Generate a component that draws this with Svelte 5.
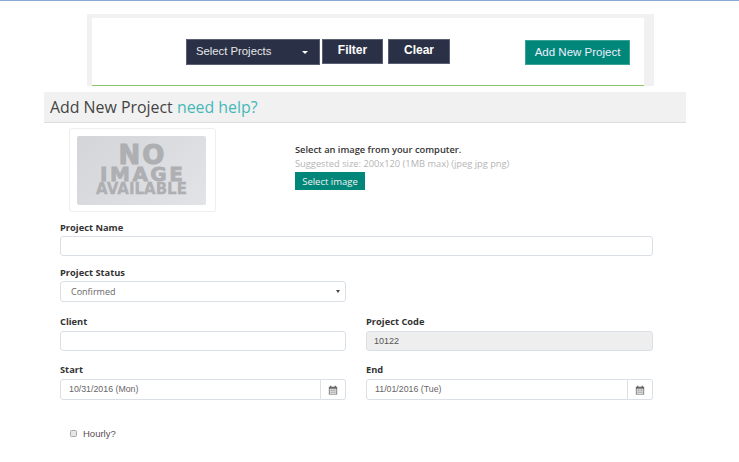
<script>
  let project = $state({ name: '', status: 'Confirmed', client: '', code: '10122', start: '10/31/2016 (Mon)', end: '11/01/2016 (Tue)', hourly: false });
</script>

<div class="page">
  <div class="toolbar-frame">
    <div class="toolbar">
      <div class="filters">
        <button class="dark select-projects">Select Projects <span class="caret"></span></button>
        <button class="dark filter">Filter</button>
        <button class="dark clear">Clear</button>
      </div>
      <button class="add-new">Add New Project</button>
    </div>
  </div>

  <div class="heading">Add New Project <span class="help">need help?</span></div>

  <div class="image-row">
    <div class="thumb">
      <div class="no-image">
        <span class="big">NO</span>
        <span class="mid">IMAGE</span>
        <span class="small">AVAILABLE</span>
      </div>
    </div>
    <div class="image-info">
      <p class="pick">Select an image from your computer.</p>
      <p class="hint">Suggested size: 200x120 (1MB max) (jpeg jpg png)</p>
      <button class="select-image">Select image</button>
    </div>
  </div>

  <form class="form">
    <div class="field name">
      <label for="name">Project Name</label>
      <input id="name" bind:value={project.name} />
    </div>

    <div class="grid status-row">
      <div class="field">
        <label for="status">Project Status</label>
        <div class="select" id="status">
          <span>{project.status}</span>
          <span class="mini-caret"></span>
        </div>
      </div>
    </div>

    <div class="grid client-row">
      <div class="field">
        <label for="client">Client</label>
        <input id="client" bind:value={project.client} />
      </div>
      <div class="field">
        <label for="code">Project Code</label>
        <input id="code" class="disabled" value={project.code} disabled />
      </div>
    </div>

    <div class="grid dates-row">
      <div class="field">
        <label for="start">Start</label>
        <div class="date-group">
          <input id="start" bind:value={project.start} />
          <span class="addon">
            <svg viewBox="0 0 12 12" width="10" height="10"><path fill="#666" d="M1 2h1.5V1h1.6v1h3.8V1h1.6v1H11v9.5H1zM2 4.5V10.5h8V4.5z"/><path fill="#666" d="M3 5.5h1.4v1.4H3zM5.3 5.5h1.4v1.4H5.3zM7.6 5.5H9v1.4H7.6zM3 7.8h1.4v1.4H3zM5.3 7.8h1.4v1.4H5.3zM7.6 7.8H9v1.4H7.6z"/></svg>
          </span>
        </div>
      </div>
      <div class="field">
        <label for="end">End</label>
        <div class="date-group">
          <input id="end" bind:value={project.end} />
          <span class="addon">
            <svg viewBox="0 0 12 12" width="10" height="10"><path fill="#666" d="M1 2h1.5V1h1.6v1h3.8V1h1.6v1H11v9.5H1zM2 4.5V10.5h8V4.5z"/><path fill="#666" d="M3 5.5h1.4v1.4H3zM5.3 5.5h1.4v1.4H5.3zM7.6 5.5H9v1.4H7.6zM3 7.8h1.4v1.4H3zM5.3 7.8h1.4v1.4H5.3zM7.6 7.8H9v1.4H7.6z"/></svg>
          </span>
        </div>
      </div>
    </div>

    <div class="hourly">
      <input id="hourly" type="checkbox" bind:checked={project.hourly} />
      <label for="hourly">Hourly?</label>
    </div>
  </form>
</div>

<style>
  :global(body) {
    margin: 0;
    background: #fff;
  }

  .page {
    width: 739px;
    height: 462px;
    overflow: hidden;
    box-sizing: border-box;
    border-top: 1px solid #8aa9d4;
    font-family: "Open Sans", sans-serif;
    color: #333;
  }

  .toolbar-frame {
    box-sizing: border-box;
    width: 567px;
    height: 72px;
    margin: 13px 0 0 87px;
    padding: 4px 10px 0 5px;
    background: #f1f1f1;
  }

  .toolbar {
    box-sizing: border-box;
    height: 68px;
    background: #fff;
    border-bottom: 1px solid #8cc269;
    display: flex;
    justify-content: space-between;
    padding: 21px 14px 0 94px;
    font-family: "Liberation Sans", sans-serif;
  }

  .filters {
    display: flex;
    gap: 2px;
    align-items: flex-start;
  }

  button {
    font-family: inherit;
    cursor: pointer;
    border-radius: 0;
    padding: 0;
  }

  .dark {
    background: #2a3045;
    border: 1px solid #5a6072;
    color: #fff;
    font-size: 12px;
    height: 25px;
    padding-bottom: 3px;
  }

  .select-projects {
    width: 134px;
    height: 26px;
    text-align: left;
    padding-left: 9px;
    position: relative;
    color: #e8e8e8;
    font-size: 11.3px;
  }

  .caret {
    position: absolute;
    right: 11px;
    top: 11px;
    border-left: 3px solid transparent;
    border-right: 3px solid transparent;
    border-top: 3px solid #fff;
  }

  .filter,
  .clear {
    font-weight: bold;
  }

  .filter {
    width: 61px;
  }

  .clear {
    width: 62px;
    margin-left: 3px;
  }

  .add-new {
    background: #00877a;
    border: 1px solid #3aa397;
    color: #eef;
    font-size: 11.5px;
    width: 105px;
    height: 25px;
    margin-top: 1px;
    padding-bottom: 2px;
  }

  .heading {
    box-sizing: border-box;
    width: 642px;
    height: 31px;
    margin: 6px 0 0 44px;
    padding: 4px 0 0 6px;
    background: #f1f1f1;
    border-bottom: 1px solid #ddd;
    font-size: 15.9px;
    line-height: 22px;
    color: #444;
  }

  .help {
    color: #45b8b8;
  }

  .image-row {
    display: flex;
    margin: 5px 0 0 69px;
    height: 84px;
  }

  .thumb {
    box-sizing: border-box;
    width: 147px;
    height: 84px;
    padding: 7px 9px 6px 7px;
    border: 1px solid #eee;
    border-radius: 3px;
  }

  .no-image {
    height: 100%;
    background: linear-gradient(135deg, #d4d5d8, #e2e3e6);
    border-radius: 2px;
    display: flex;
    flex-direction: column;
    align-items: center;
    justify-content: center;
    font-family: "DejaVu Sans", sans-serif;
    font-weight: bold;
    color: #aeafb2;
    line-height: 1;
  }

  .big {
    font-size: 26px;
    line-height: 21px;
    letter-spacing: 2px;
    margin-right: -2px;
    -webkit-text-stroke: 1px #aeafb2;
  }

  .mid {
    font-size: 20px;
    line-height: 17px;
    letter-spacing: 2.5px;
    margin-right: -2.5px;
    -webkit-text-stroke: 0.8px #aeafb2;
  }

  .small {
    font-size: 15px;
    line-height: 13px;
    -webkit-text-stroke: 0.3px #aeafb2;
  }

  .image-info {
    margin-left: 79px;
    padding-top: 15px;
    font-size: 9.3px;
  }

  .image-info p {
    margin: 0;
    line-height: 14px;
  }

  .pick {
    color: #333;
    font-weight: 600;
    white-space: nowrap;
  }

  .hint {
    color: #b5b5b5;
    white-space: nowrap;
  }

  .select-image {
    display: block;
    margin-top: 1px;
    width: 70px;
    height: 18px;
    background: #00877a;
    border: none;
    color: #f2f2f2;
    font-size: 9.5px;
  }

  .form {
    margin: 9px 0 0 60px;
    width: 593px;
  }

  .field {
    display: flex;
    flex-direction: column;
    min-width: 0;
  }

  label {
    font-size: 9.3px;
    font-weight: 700;
    line-height: 14px;
    color: #333;
    margin-bottom: 1px;
  }

  .client-row label,
  .dates-row label {
    margin-bottom: 2px;
  }

  input:not([type="checkbox"]),
  .select {
    box-sizing: border-box;
    width: 100%;
    height: 20px;
    border: 1px solid #dbe0e6;
    border-radius: 3px;
    background: #fff;
    font-family: inherit;
    font-size: 9px;
    color: #555;
    padding: 0 10px;
    outline: none;
  }

  .grid {
    display: grid;
    grid-template-columns: 286px 287px;
    column-gap: 20px;
  }

  .status-row {
    margin-top: 10px;
  }

  .select {
    height: 21px;
    display: flex;
    align-items: center;
    justify-content: space-between;
    padding: 0 5px 0 10px;
    color: #666;
  }

  .mini-caret {
    border-left: 2px solid transparent;
    border-right: 2px solid transparent;
    border-top: 3px solid #444;
  }

  .client-row {
    margin-top: 13px;
  }

  .disabled {
    background: #eee !important;
    font-family: "Liberation Sans", sans-serif !important;
    padding: 0 7px !important;
  }

  .dates-row {
    margin-top: 12px;
  }

  .date-group {
    display: flex;
    height: 21px;
  }

  .date-group input {
    flex: 1;
    min-width: 0;
    height: 21px;
    border-radius: 3px 0 0 3px;
    padding: 0 8px 1px;
    font-family: "Liberation Sans", sans-serif;
    font-size: 8.8px;
    color: #666;
  }

  .addon {
    box-sizing: border-box;
    width: 25px;
    border: 1px solid #dbe0e6;
    border-left: none;
    border-radius: 0 3px 3px 0;
    display: flex;
    align-items: center;
    justify-content: center;
  }

  .hourly {
    display: flex;
    align-items: center;
    margin: 27px 0 0 10px;
  }

  .hourly input {
    appearance: none;
    box-sizing: border-box;
    width: 7px;
    height: 7px;
    margin: -2px 6px 0 0;
    background: #e6e6e6;
    border: 1px solid #a8a8a8;
    border-radius: 1.5px;
  }

  .hourly label {
    font-family: "Liberation Sans", sans-serif;
    font-size: 9.5px;
    font-weight: normal;
    color: #5a4c56;
    margin: 0;
  }
</style>
